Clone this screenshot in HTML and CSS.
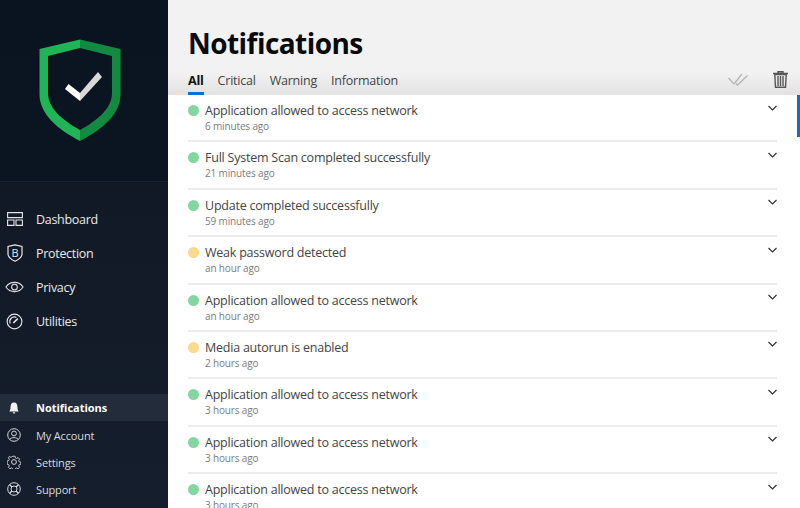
FILE: index.html
```html
<!DOCTYPE html>
<html lang="en">
<head>
<meta charset="utf-8">
<title>Notifications</title>
<link rel="stylesheet" href="styles.css">
</head>
<body>
<div class="app">
  <aside class="sidebar">
    <div class="logo">
      <svg width="84" height="104" viewBox="0 0 84 104">
        <path d="M41 .5 L.5 10 V55 C.5 75 18 90 41 102 Z" fill="#1fb456"/>
        <path d="M41 .5 L81.500 10 V55 C81.500 75 64 90 41 102 Z" fill="#128a41"/>
        <path d="M41 9 L9 17 V54 C9 69 23 81 41 91 C59 81 73 69 73 54 V17 Z" fill="#0b1521"/>
        <path d="M26 50 L29.500 45 L41 54 L41 62 Z" fill="#fff"/>
        <path d="M41 62 L41 54 L59 33 L63 38 Z" fill="#d9d9d9"/>
      </svg>
    </div>
    <nav class="main-nav">
      <a class="nav-item"><svg width="16" height="14" viewBox="0 0 16 14"><path d="M.6 .6h14.800v5H.6zM.6 8h6.400v5.400H.6zM9 8h6.400v5.400H9z" fill="none" stroke="#e4e6ea" stroke-width="1.100"/></svg><span>Dashboard</span></a>
      <a class="nav-item"><svg width="16" height="18" viewBox="0 0 16 18"><path d="M8 .8 L1 2.500 V10 C1 13 4.500 15.700 8 17.200 C11.500 15.700 15 13 15 10 V2.500 Z" fill="none" stroke="#e4e6ea" stroke-width="1.200"/><text x="8" y="12.500" class="ic-b">B</text></svg><span>Protection</span></a>
      <a class="nav-item"><svg width="19" height="12" viewBox="0 0 20 12"><path d="M1 6 C5 -.5 15 -.5 19 6 C15 12.500 5 12.500 1 6Z" fill="none" stroke="#e4e6ea" stroke-width="1.100"/><circle cx="10" cy="6" r="3" fill="none" stroke="#e4e6ea" stroke-width="1.100"/></svg><span>Privacy</span></a>
      <a class="nav-item"><svg width="17" height="17" viewBox="0 0 18 18"><circle cx="9" cy="9" r="7.800" fill="none" stroke="#e4e6ea" stroke-width="1.200"/><path d="M4.500 11 A4.800 4.800 0 0 1 11 4.700" fill="none" stroke="#e4e6ea" stroke-width="1.200"/><path d="M7.800 10.500 L12.500 6" stroke="#e4e6ea" stroke-width="1.600"/></svg><span>Utilities</span></a>
    </nav>
    <nav class="sub-nav">
      <a class="sub-item active"><svg width="12" height="14" viewBox="0 0 14 14"><path d="M7 .5 C4 .5 3 3 3 5.500 C3 8 2.500 9.500 1.500 11 H12.500 C11.500 9.500 11 8 11 5.500 C11 3 10 .5 7 .5Z M5.500 12 H8.500 C8.500 14 5.500 14 5.500 12Z" fill="#f0f1f3"/></svg><span>Notifications</span></a>
      <a class="sub-item"><svg width="14" height="14" viewBox="0 0 14 14"><circle cx="7" cy="7" r="6.300" fill="none" stroke="#d4d7dc"/><circle cx="7" cy="5.500" r="2.400" fill="none" stroke="#d4d7dc"/><path d="M2.800 11.500 C3.500 9 10.500 9 11.200 11.500" fill="none" stroke="#d4d7dc"/></svg><span>My Account</span></a>
      <a class="sub-item"><svg width="14" height="14" viewBox="0 0 14 14"><path d="M5.800 .7h2.400l.4 1.900 1.300.6 1.700-1 1.600 1.700-1 1.600.6 1.400 1.800.4v2.400l-1.800.4-.6 1.300 1 1.700-1.700 1.600-1.600-1-1.300.6-.4 1.800H5.800l-.4-1.800-1.300-.6-1.700 1-1.600-1.700 1-1.600-.6-1.300-1.800-.4V5.900l1.800-.4.600-1.400-1-1.600L1.800 .9l1.700 1 1.300-.6Z" transform="translate(.7 .6) scale(.9)" fill="none" stroke="#d4d7dc"/><circle cx="7" cy="7" r="2.400" fill="none" stroke="#d4d7dc"/></svg><span>Settings</span></a>
      <a class="sub-item"><svg width="14" height="14" viewBox="0 0 14 14"><circle cx="7" cy="7" r="6.300" fill="none" stroke="#d4d7dc"/><circle cx="7" cy="7" r="3" fill="none" stroke="#d4d7dc"/><path d="M2.500 2.500 L4.900 4.900 M11.500 2.500 L9.100 4.900 M2.500 11.500 L4.900 9.100 M11.500 11.500 L9.100 9.100" stroke="#d4d7dc" stroke-width="1.400"/></svg><span>Support</span></a>
    </nav>
  </aside>
  <main class="content">
    <header class="head">
      <h1>Notifications</h1>
      <div class="tabbar">
        <div class="tabs">
          <a class="tab active">All</a>
          <a class="tab">Critical</a>
          <a class="tab">Warning</a>
          <a class="tab">Information</a>
        </div>
        <div class="tools">
          <svg width="20" height="13" viewBox="0 0 20 13"><path d="M.5 5 L6 11 L14 1 M8 10.500 L9.500 12 L19.500 2.500" fill="none" stroke="#b5b5b5" stroke-width="1.300"/></svg>
          <svg width="15" height="17" viewBox="0 0 15 17"><path d="M0 2.500H15M5 2V.7H10V2" fill="none" stroke="#555" stroke-width="1.400"/><path d="M1.800 3.500H13.200L12.500 16.300H2.500Z" fill="none" stroke="#555" stroke-width="1.400"/><path d="M5 5V15M7.500 5V15M10 5V15" stroke="#555" stroke-width="1.400"/></svg>
        </div>
      </div>
    </header>
    <div class="list">
      <div class="thumb"></div>
      <div class="row"><i class="dot ok"></i><div class="text"><p class="title">Application allowed to access network</p><p class="time">6 minutes ago</p></div><svg class="chev" width="9" height="6" viewBox="0 0 9 6"><path d="M.5 1 L4.500 5 L8.500 1" fill="none" stroke="#333" stroke-width="1.200"/></svg></div>
      <div class="row"><i class="dot ok"></i><div class="text"><p class="title">Full System Scan completed successfully</p><p class="time">21 minutes ago</p></div><svg class="chev" width="9" height="6" viewBox="0 0 9 6"><path d="M.5 1 L4.500 5 L8.500 1" fill="none" stroke="#333" stroke-width="1.200"/></svg></div>
      <div class="row"><i class="dot ok"></i><div class="text"><p class="title">Update completed successfully</p><p class="time">59 minutes ago</p></div><svg class="chev" width="9" height="6" viewBox="0 0 9 6"><path d="M.5 1 L4.500 5 L8.500 1" fill="none" stroke="#333" stroke-width="1.200"/></svg></div>
      <div class="row"><i class="dot warn"></i><div class="text"><p class="title">Weak password detected</p><p class="time">an hour ago</p></div><svg class="chev" width="9" height="6" viewBox="0 0 9 6"><path d="M.5 1 L4.500 5 L8.500 1" fill="none" stroke="#333" stroke-width="1.200"/></svg></div>
      <div class="row"><i class="dot ok"></i><div class="text"><p class="title">Application allowed to access network</p><p class="time">an hour ago</p></div><svg class="chev" width="9" height="6" viewBox="0 0 9 6"><path d="M.5 1 L4.500 5 L8.500 1" fill="none" stroke="#333" stroke-width="1.200"/></svg></div>
      <div class="row"><i class="dot warn"></i><div class="text"><p class="title">Media autorun is enabled</p><p class="time">2 hours ago</p></div><svg class="chev" width="9" height="6" viewBox="0 0 9 6"><path d="M.5 1 L4.500 5 L8.500 1" fill="none" stroke="#333" stroke-width="1.200"/></svg></div>
      <div class="row"><i class="dot ok"></i><div class="text"><p class="title">Application allowed to access network</p><p class="time">3 hours ago</p></div><svg class="chev" width="9" height="6" viewBox="0 0 9 6"><path d="M.5 1 L4.500 5 L8.500 1" fill="none" stroke="#333" stroke-width="1.200"/></svg></div>
      <div class="row"><i class="dot ok"></i><div class="text"><p class="title">Application allowed to access network</p><p class="time">3 hours ago</p></div><svg class="chev" width="9" height="6" viewBox="0 0 9 6"><path d="M.5 1 L4.500 5 L8.500 1" fill="none" stroke="#333" stroke-width="1.200"/></svg></div>
      <div class="row"><i class="dot ok"></i><div class="text"><p class="title">Application allowed to access network</p><p class="time">3 hours ago</p></div><svg class="chev" width="9" height="6" viewBox="0 0 9 6"><path d="M.5 1 L4.500 5 L8.500 1" fill="none" stroke="#333" stroke-width="1.200"/></svg></div>
    </div>
  </main>
</div>
</body>
</html>
```
FILE: styles.css
```css
* { box-sizing: border-box; }
html, body { margin: 0; height: 100%; overflow: hidden; }
body { font-family: "Open Sans", "Noto Sans", sans-serif; background: #fff; }
p, h1 { margin: 0; }
.app { display: flex; width: 800px; height: 508px; }

.sidebar {
  width: 168px; flex: none; display: flex; flex-direction: column;
  background: linear-gradient(180deg, #0a1420 0%, #0b1521 36%, #111925 36%, #151e2d 100%);
  color: #e8eaed;
}
.logo { height: 182px; padding: 39px 0 0 39px; border-bottom: 1px solid #1a222e; }
.logo svg { display: block; }
.main-nav { display: flex; flex-direction: column; padding-top: 20px; }
.nav-item {
  height: 34px; display: grid; grid-template-columns: 29px 1fr; column-gap: 7px; align-items: center;
  font-size: 12.500px; letter-spacing: -.3px;
}
.nav-item svg { justify-self: center; }
.ic-b { font: 400 11px "Open Sans", sans-serif; fill: #e4e6ea; text-anchor: middle; }
.sub-nav { margin-top: auto; display: flex; flex-direction: column; padding-bottom: 5px; }
.sub-item {
  height: 27.200px; display: grid; grid-template-columns: 27px 1fr; column-gap: 9px; align-items: center;
  font-size: 11px; letter-spacing: -.15px; color: #d8dade;
}
.sub-item svg { justify-self: center; }
.sub-item.active { background: #232c3a; color: #fff; font-weight: 700; letter-spacing: -.02px; }

.content { flex: 1; min-width: 0; display: flex; flex-direction: column; }
.head {
  height: 95px; flex: none; padding: 24px 0 0 20px;
  background: linear-gradient(180deg, #f2f2f2 0%, #f2f2f2 76%, #e2e2e2 100%);
}
h1 { font-size: 28px; line-height: 38px; font-weight: 700; color: #0a0a0a; letter-spacing: -.55px; }
.tabbar { display: flex; justify-content: space-between; padding-top: 4px; }
.tabs { display: flex; gap: 14px; height: 29px; }
.tab { font-size: 12.500px; letter-spacing: -.22px; line-height: 30px; color: #444; height: 29px; }
.tab.active { color: #111; font-weight: 700; border-bottom: 3px solid #0b6fd4; }
.tools { display: flex; align-items: center; gap: 25px; padding: 0 12px 0 0; height: 26px; }

.list { position: relative; flex: 1; overflow: hidden; padding: 0 23px 0 20px; background: #fff; }
.thumb { position: absolute; right: 0; top: 0; width: 3px; height: 42px; background: #0b6fd4; }
.row { height: 47.400px; display: flex; align-items: flex-start; border-bottom: 2px solid #ececec; padding-top: 6px; }
.dot { width: 11px; height: 11px; border-radius: 50%; flex: none; margin: 4px 6px 0 0; }
.dot.ok { background: #84d6a0; }
.dot.warn { background: #fbd98f; }
.text { flex: 1; min-width: 0; }
.title { font-size: 12.500px; letter-spacing: -.23px; line-height: 20px; color: #444; }
.time { font-size: 10px; letter-spacing: -.15px; line-height: 12px; color: #7c7c7c; margin-top: -1px; }
.chev { flex: none; margin: 3.500px 0 0 0; }
```
